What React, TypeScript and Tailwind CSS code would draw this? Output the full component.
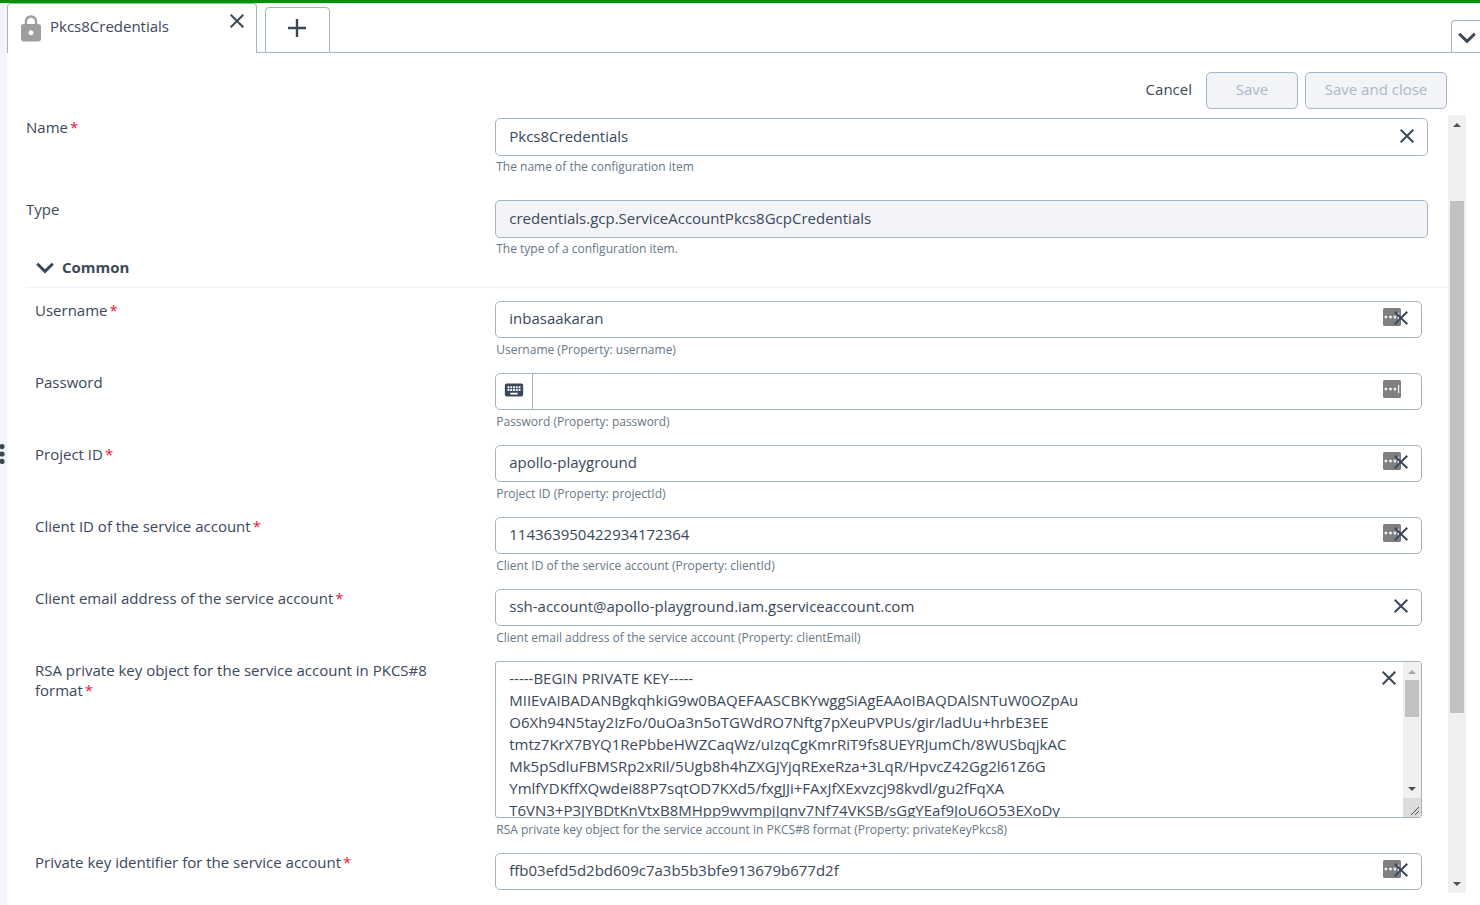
import React from 'react';
import { MdKeyboard, MdLock } from 'react-icons/md';

interface FieldProps {
  id: string;
  label: string;
  value: string;
  help?: string;
  required?: boolean;
  managed?: boolean;
}

const privateKey = `-----BEGIN PRIVATE KEY-----
MIIEvAIBADANBgkqhkiG9w0BAQEFAASCBKYwggSiAgEAAoIBAQDAlSNTuW0OZpAu
O6Xh94N5tay2IzFo/0uOa3n5oTGWdRO7Nftg7pXeuPVPUs/gir/ladUu+hrbE3EE
tmtz7KrX7BYQ1RePbbeHWZCaqWz/uIzqCgKmrRiT9fs8UEYRJumCh/8WUSbqjkAC
Mk5pSdluFBMSRp2xRil/5Ugb8h4hZXGJYjqRExeRza+3LqR/HpvcZ42Gg2l61Z6G
YmlfYDKffXQwdei88P7sqtOD7KXd5/fxgJJi+FAxJfXExvzcj98kvdl/gu2fFqXA
T6VN3+P3JYBDtKnVtxB8MHpp9wvmpjJqnv7Nf74VKSB/sGgYEaf9JoU6O53EXoDy`;

const CloseIcon = () => (
  <svg width="14" height="14" viewBox="0 0 14 14" fill="none" stroke="currentColor" strokeWidth="2">
    <path d="M0.7 0.7 13.3 13.3M13.3 0.7 0.7 13.3" />
  </svg>
);

const ChevronIcon = () => (
  <svg width="18" height="12" viewBox="0 0 18 12" fill="none" stroke="currentColor" strokeWidth="3">
    <path d="M1.2 1.8 9 9.4 16.8 1.8" />
  </svg>
);

// Badge injected by the password manager
const ManagerIcon = () => (
  <svg width="18" height="18" viewBox="0 0 18 18">
    <rect width="18" height="18" rx="1.5" fill="#7f7f7f" />
    <g fill="#f0f0f0">
      <rect x="1.6" y="7.8" width="2.6" height="2.6" rx="0.8" />
      <rect x="6.2" y="7.8" width="2.6" height="2.6" rx="0.8" />
      <rect x="10.6" y="7.8" width="2.6" height="2.6" rx="0.8" />
      <rect x="15" y="4.8" width="1.2" height="8.4" />
    </g>
  </svg>
);

const ArrowIcon = ({ down, muted }: { down?: boolean; muted?: boolean }) => (
  <span className={down ? 'flex h-[18px] shrink-0 items-center justify-center' : 'flex h-[18px] shrink-0 items-center justify-center pt-[2px]'}>
    <svg width="8" height="4" viewBox="0 0 8 4" fill={muted ? '#a3a3a3' : '#505050'}>
      <path d={down ? 'M0 0h8L4 4z' : 'M0 4h8L4 0z'} />
    </svg>
  </span>
);

const FieldLabel = ({ id, label, required, nested }: { id: string; label: string; required?: boolean; nested?: boolean }) => (
  <div className={nested ? '-mt-px w-[33%] shrink-0 pr-10 pl-[9px]' : '-mt-px w-[33%] shrink-0 pr-10'}>
    <label htmlFor={id} className="block leading-5">
      {label}
      {required && <span className="ml-[2px] text-[#e6173c]">*</span>}
    </label>
  </div>
);

const Help = ({ children, nested }: { children: React.ReactNode; nested?: boolean }) => (
  <p className={nested ? 'mt-1 pl-px text-[12px] leading-4 text-[#667785]' : 'mt-[3px] pl-px text-[12px] leading-4 text-[#667785]'}>
    {children}
  </p>
);

const PropertyField = ({ id, label, value, help, required, managed }: FieldProps) => (
  <div className="flex h-[72px]">
    <FieldLabel id={id} label={label} required={required} nested />
    <div className="flex-1 pr-[26px]">
      <div className="relative">
        <input
          id={id}
          type="text"
          defaultValue={value}
          className="block h-[37px] w-full rounded-[5px] border border-[#a5b4c1] bg-white pr-12 pb-[3px] pl-[13px] outline-none"
        />
        {managed && (
          <span className="absolute top-[7px] right-[21px]">
            <ManagerIcon />
          </span>
        )}
        <button type="button" aria-label={`Clear ${label}`} className="absolute top-[10px] right-[14px]">
          <CloseIcon />
        </button>
      </div>
      {help && <Help nested>{help}</Help>}
    </div>
  </div>
);

const App: React.FC = () => {
  return (
    <div className="flex h-screen flex-col overflow-hidden border-t-[3px] border-[#009300] bg-white font-['Open_Sans',sans-serif] text-[15px] text-[#3b4859]">
      <div className="flex min-h-0 flex-1">
        <aside className="flex w-[7px] shrink-0 items-center bg-[#f3f4f9]">
          <svg width="5" height="20" viewBox="0 0 5 20" fill="currentColor">
            <circle cx="2" cy="2.6" r="2.6" />
            <circle cx="2" cy="10" r="2.6" />
            <circle cx="2" cy="17.4" r="2.6" />
          </svg>
        </aside>

        <main className="flex min-w-0 flex-1 flex-col">
          <nav className="flex h-[50px] shrink-0 items-end">
            <div className="flex h-full w-[250px] rounded-t-[4px] border border-b-0 border-[#a5b4c1] pt-[10px] pr-3 pl-2">
              <MdLock size={30} className="shrink-0 text-[#9e9e9e]" />
              <span className="ml-1 flex-1 leading-6">Pkcs8Credentials</span>
              <button type="button" aria-label="Close tab" className="h-3">
                <CloseIcon />
              </button>
            </div>
            <div className="w-2 border-b border-[#a5b4c1]" />
            <button
              type="button"
              aria-label="New tab"
              className="flex h-[46px] w-[65px] items-center justify-center rounded-t-[4px] border border-[#a5b4c1] pr-px pb-1"
            >
              <svg width="18" height="18" viewBox="0 0 18 18" stroke="currentColor" strokeWidth="2.4">
                <path d="M9 0v18M0 9h18" />
              </svg>
            </button>
            <div className="flex-1 border-b border-[#a5b4c1]" />
            <button
              type="button"
              aria-label="All tabs"
              className="flex h-[33px] w-[29px] items-center rounded-tl-[4px] border border-r-0 border-[#a5b4c1] pt-[2px] pl-[6px]"
            >
              <ChevronIcon />
            </button>
          </nav>

          <div className="flex shrink-0 items-center justify-end gap-[7px] pt-[19px] pr-[33px] pb-[6px]">
            <button type="button" className="mr-[7px] pb-[2px]">
              Cancel
            </button>
            <button
              type="button"
              disabled
              className="h-[37px] w-[92px] rounded-[5px] border border-[#a5b4c1] bg-[#f3f4f8] pb-[2px] text-[#a9b9c8]"
            >
              Save
            </button>
            <button
              type="button"
              disabled
              className="h-[37px] w-[142px] rounded-[5px] border border-[#a5b4c1] bg-[#f3f4f8] pb-[2px] text-[#a9b9c8]"
            >
              Save and close
            </button>
          </div>

          <div className="flex min-h-0 flex-1 pr-[14px] pl-[19px]">
            <form className="min-w-0 flex-1 overflow-hidden pt-[3px]">
              <div className="flex h-[82px]">
                <FieldLabel id="name" label="Name" required />
                <div className="flex-1 pr-5">
                  <div className="relative">
                    <input
                      id="name"
                      type="text"
                      defaultValue="Pkcs8Credentials"
                      className="block h-[38px] w-full rounded-[5px] border border-[#a5b4c1] bg-white pr-12 pb-[2px] pl-[13px] outline-none"
                    />
                    <button type="button" aria-label="Clear Name" className="absolute top-[11px] right-[14px]">
                      <CloseIcon />
                    </button>
                  </div>
                  <Help>The name of the configuration item</Help>
                </div>
              </div>
              <div className="flex h-[57px]">
                <FieldLabel id="type" label="Type" />
                <div className="flex-1 pr-5">
                  <input
                    id="type"
                    type="text"
                    readOnly
                    value="credentials.gcp.ServiceAccountPkcs8GcpCredentials"
                    className="block h-[38px] w-full rounded-[5px] border border-[#a5b4c1] bg-[#f3f4f8] px-[13px] pb-[2px] outline-none"
                  />
                  <Help>The type of a configuration item.</Help>
                </div>
              </div>

              <h2 className="mb-[13px] border-b border-[#f0f1f4] pb-2">
                <button type="button" className="flex items-center gap-2 pl-[10px] leading-5 font-bold">
                  <ChevronIcon />
                  <span className="pb-[2px]">Common</span>
                </button>
              </h2>

              <PropertyField id="username" label="Username" value="inbasaakaran" help="Username (Property: username)" required managed />
              <div className="flex h-[72px]">
                <FieldLabel id="password" label="Password" nested />
                <div className="flex-1 pr-[26px]">
                  <div className="relative flex h-[37px] rounded-[5px] border border-[#a5b4c1]">
                    <button
                      type="button"
                      aria-label="Choose password source"
                      className="flex w-[37px] shrink-0 items-center justify-center border-r border-[#a5b4c1] pb-[3px]"
                    >
                      <MdKeyboard size={22} />
                    </button>
                    <input id="password" type="password" className="min-w-0 flex-1 rounded-r-[5px] pr-12 pl-[13px] outline-none" />
                    <span className="absolute top-[6px] right-5">
                      <ManagerIcon />
                    </span>
                  </div>
                  <Help nested>Password (Property: password)</Help>
                </div>
              </div>
              <PropertyField id="projectId" label="Project ID" value="apollo-playground" help="Project ID (Property: projectId)" required managed />
              <PropertyField
                id="clientId"
                label="Client ID of the service account"
                value="114363950422934172364"
                help="Client ID of the service account (Property: clientId)"
                required
                managed
              />
              <PropertyField
                id="clientEmail"
                label="Client email address of the service account"
                value="ssh-account@apollo-playground.iam.gserviceaccount.com"
                help="Client email address of the service account (Property: clientEmail)"
                required
              />

              <div className="flex h-[192px]">
                <FieldLabel id="privateKey" label="RSA private key object for the service account in PKCS#8 format" required nested />
                <div className="flex-1 pr-[26px]">
                  <div className="relative flex h-[157px] rounded-[3px] border border-[#a5b4c1]">
                    <textarea
                      id="privateKey"
                      defaultValue={privateKey}
                      className="min-w-0 flex-1 resize-none overflow-hidden pt-[5px] pr-12 pl-[13px] leading-[22px] outline-none"
                    />
                    <button type="button" aria-label="Clear private key" className="absolute top-[9px] right-[25px]">
                      <CloseIcon />
                    </button>
                    <div className="flex w-[18px] shrink-0 flex-col bg-[#f0f0f0]">
                      <ArrowIcon muted />
                      <div className="mx-[2px] h-[37px] bg-[#c1c1c1]" />
                      <div className="flex-1" />
                      <ArrowIcon down />
                      <svg width="18" height="19" viewBox="0 0 18 19" className="shrink-0">
                        <path d="M0 0h18v19H0z" fill="#dcdcdc" />
                        <path d="M8 17 16 9M12 17l4-4" stroke="#505050" />
                      </svg>
                    </div>
                  </div>
                  <Help nested>RSA private key object for the service account in PKCS#8 format (Property: privateKeyPkcs8)</Help>
                </div>
              </div>
              <PropertyField
                id="privateKeyId"
                label="Private key identifier for the service account"
                value="ffb03efd5d2bd609c7a3b5b3bfe913679b677d2f"
                required
                managed
              />
            </form>

            <div className="mb-3 flex w-[18px] shrink-0 flex-col bg-[#f0f0f0]">
              <ArrowIcon />
              <div className="flex-[68]" />
              <div className="mx-[2px] flex-[512] bg-[#c1c1c1]" />
              <div className="flex-[162]" />
              <ArrowIcon down />
            </div>
          </div>
        </main>
      </div>
    </div>
  );
};

export default App;
